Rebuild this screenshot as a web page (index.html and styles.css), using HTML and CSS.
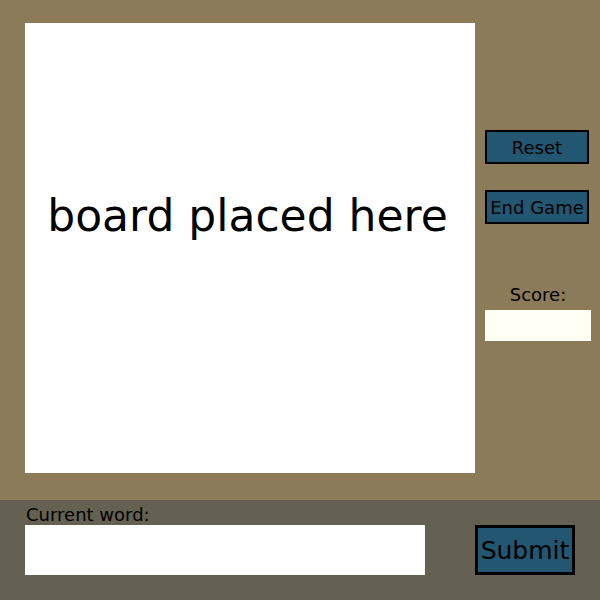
FILE: index.html
```html
<!DOCTYPE html>
<html lang="en">
<head>
    <meta charset="UTF-8">
    <title>Word Game</title>
    <link rel="stylesheet" href="styles.css">
</head>
<body>
    <div class="top">
        <div class="board">board placed here</div>
        <div class="side">
            <button class="btn reset">Reset</button>
            <button class="btn end">End Game</button>
            <div class="score-label">Score:</div>
            <div class="score-box"></div>
        </div>
    </div>
    <div class="bottom">
        <div class="word-col">
            <div class="word-label">Current word:</div>
            <div class="word-box"></div>
        </div>
        <button class="btn submit">Submit</button>
    </div>
</body>
</html>
```

FILE: styles.css
```css
body {
    margin: 0;
    width: 600px;
    height: 600px;
    font-family: "DejaVu Sans", sans-serif;
    color: #000;
    background-color: #8b7b59;
}

.top {
    height: 500px;
    display: flex;
    background-color: #8b7b59;
    box-sizing: border-box;
    padding: 23px 0 0 25px;
}

.board {
    width: 450px;
    height: 450px;
    box-sizing: border-box;
    padding: 167px 5px 0 0;
    background-color: #fff;
    text-align: center;
    font-size: 44px;
    line-height: 51px;
}

.side {
    display: flex;
    flex-direction: column;
    align-items: flex-start;
    padding: 107px 0 0 10px;
}

.btn {
    font-family: "DejaVu Sans", sans-serif;
    background-color: #235670;
    color: #000;
    border: 2px solid #000;
    padding: 0;
    cursor: pointer;
}

.reset, .end {
    width: 104px;
    height: 34px;
    font-size: 18px;
}

.end {
    margin-top: 26px;
}

.score-label {
    width: 106px;
    text-align: center;
    font-size: 18px;
    line-height: 21px;
    margin-top: 60px;
    height: 26px;
}

.score-box {
    width: 106px;
    height: 31px;
    background-color: #fffff5;
}

.bottom {
    height: 100px;
    background-color: #646152;
    display: flex;
    align-items: flex-start;
    padding-left: 25px;
    box-sizing: border-box;
}

.word-col {
    padding-top: 4px;
}

.word-label {
    font-size: 18px;
    line-height: 21px;
    padding-left: 1px;
}

.word-box {
    width: 400px;
    height: 50px;
    background-color: #fff;
}

.submit {
    margin: 25px 0 0 50px;
    width: 100px;
    height: 50px;
    font-size: 25px;
    border-width: 3px;
}
```
